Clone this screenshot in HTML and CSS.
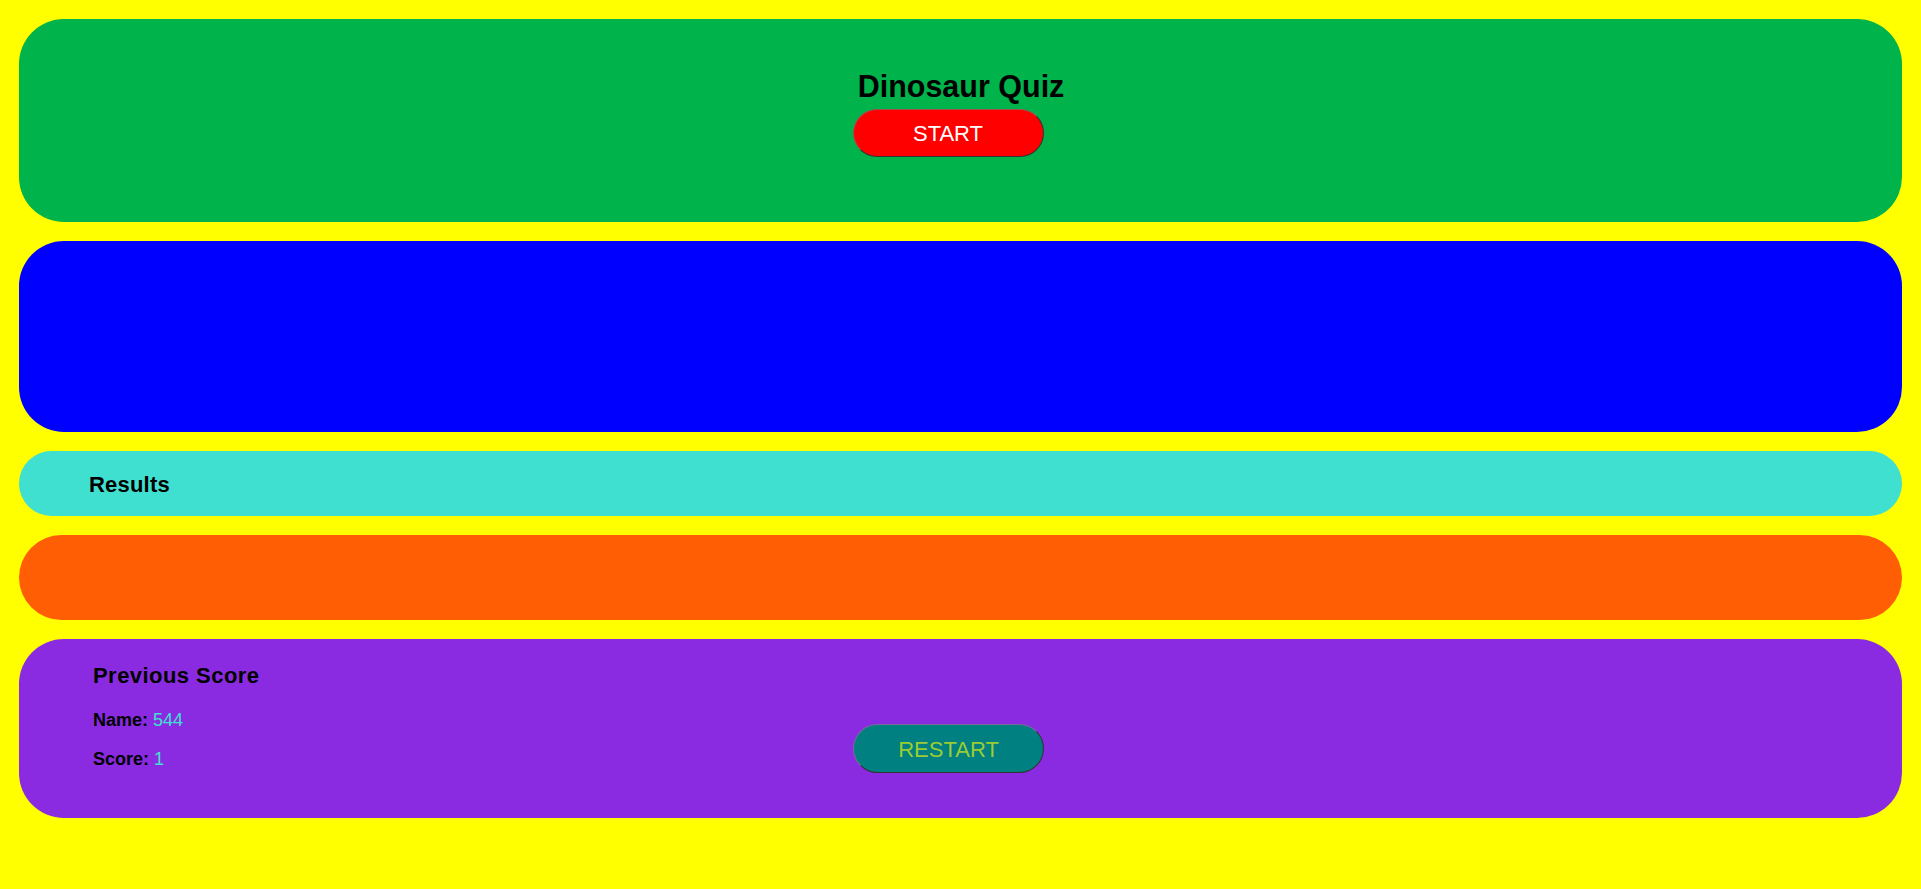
FILE: index.html
```html
<!DOCTYPE html>
<html lang="en">
<head>
<meta charset="utf-8">
<title>Dinosaur Quiz</title>
<link rel="stylesheet" href="styles.css">
</head>
<body>
  <main class="page">
    <section class="panel panel-start">
      <h1 class="title">Dinosaur Quiz</h1>
      <button class="btn btn-start" type="button">START</button>
    </section>
    <section class="panel panel-question"></section>
    <section class="panel panel-results">
      <h2 class="results-title">Results</h2>
    </section>
    <section class="panel panel-answers"></section>
    <section class="panel panel-previous">
      <div class="prev-info">
        <h2 class="prev-title">Previous Score</h2>
        <p class="prev-line"><span class="label">Name:</span> <span class="value">544</span></p>
        <p class="prev-line"><span class="label">Score:</span> <span class="value">1</span></p>
      </div>
      <button class="btn btn-restart" type="button">RESTART</button>
    </section>
  </main>
</body>
</html>
```

FILE: styles.css
```css
html, body {
  margin: 0;
  padding: 0;
}

body {
  background: #ffff00;
  font-family: "Liberation Sans", Arial, sans-serif;
  color: #000;
}

.page {
  padding: 19px 19px 0 19px;
  display: flex;
  flex-direction: column;
  gap: 19px;
}

.panel {
  box-sizing: border-box;
  border-radius: 45px;
}

.panel-start {
  background: #00b34b;
  height: 203px;
  padding-top: 50px;
  display: flex;
  flex-direction: column;
  align-items: center;
}

.title {
  margin: 0 0 6px 0;
  font-size: 30.5px;
  font-weight: 700;
  line-height: 34px;
  padding-left: 1px;
}

.btn {
  box-sizing: border-box;
  width: 191px;
  height: 48px;
  border-radius: 25px;
  border-style: solid;
  border-width: 1px;
  font-family: "Liberation Sans", Arial, sans-serif;
  font-size: 22px;
  padding: 2px 0 0 0;
  cursor: pointer;
}

.btn-start {
  background: #ff0000;
  color: #ffffff;
  margin-right: 25px;
  border-color: #a05050 #333333 #333333 #a05050;
}

.panel-question {
  background: #0000ff;
  height: 191px;
}

.panel-results {
  background: #40e0d0;
  height: 65px;
  display: flex;
  align-items: center;
  padding: 2px 0 0 70px;
}

.results-title {
  margin: 0;
  font-size: 22px;
  font-weight: 700;
  letter-spacing: 0.2px;
  line-height: 25px;
}

.panel-answers {
  background: #ff5e05;
  height: 85px;
}

.panel-previous {
  background: #8a2be2;
  height: 179px;
  padding: 24px 98px 0 74px;
  display: grid;
  grid-template-columns: 1fr auto 1fr;
  align-items: start;
}

.prev-info {
  display: flex;
  flex-direction: column;
}

.prev-title {
  margin: 0 0 22px 0;
  font-size: 22px;
  font-weight: 700;
  letter-spacing: 0.45px;
  line-height: 25px;
}

.prev-line {
  margin: 0 0 19px 0;
  font-size: 18px;
  line-height: 20px;
}

.label {
  font-weight: 700;
}

.value {
  color: #40e0d0;
}

.btn-restart {
  grid-column: 2;
  margin-top: 61px;
  height: 49px;
  background: #008080;
  color: #9acd32;
  border-color: #7a6a9a #333333 #333333 #7a6a9a;
}
```
